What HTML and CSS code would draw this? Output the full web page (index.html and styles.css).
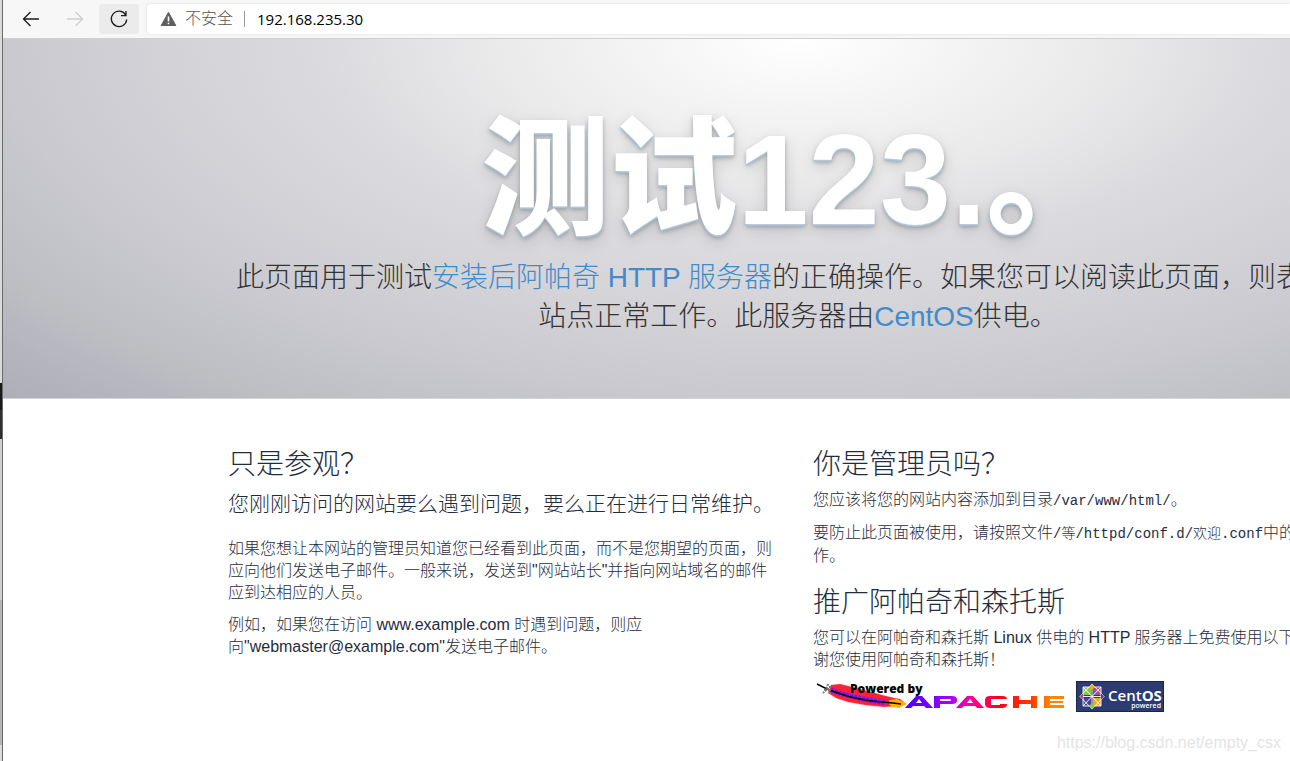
FILE: index.html
```
<!DOCTYPE html>
<html lang="zh-CN">

<head>
    <meta charset="UTF-8">
    <title>测试123</title>
    <link rel="stylesheet" href="styles.css">
</head>

<body>
    <div class="edge"></div>
    <div class="browser">
        <header class="toolbar">
            <button type="button" class="nav" aria-label="后退">
                <svg width="20" height="20" viewBox="0 0 20 20" fill="none" stroke="#1b1b1b" stroke-width="1.3"><path d="M18 10H2.500M9.500 3L2.500 10l7 7"/></svg>
            </button>
            <button type="button" class="nav" aria-label="前进" disabled>
                <svg width="20" height="20" viewBox="0 0 20 20" fill="none" stroke="#cfcfcf" stroke-width="1.3"><path d="M2 10h15.500M10.500 3l7 7-7 7"/></svg>
            </button>
            <button type="button" class="nav reload" aria-label="刷新">
                <svg width="20" height="20" viewBox="0 0 20 20" fill="none" stroke="#1b1b1b" stroke-width="1.3"><path d="M16.800 6.200A7.700 7.700 0 1 0 17.700 10.500M17 2v4.700h-5"/></svg>
            </button>
            <div class="address">
                <svg width="17" height="16" viewBox="0 0 17 16"><path fill="#5f5f5f" stroke="#5f5f5f" stroke-linejoin="round" d="M8.500 1.300L15.800 14.500H1.200z"/><path fill="#fff" d="M7.700 5.500h1.600v5H7.700zM7.700 11.700h1.600v1.600H7.700z"/></svg>
                <span class="unsafe">不安全</span>
                <input type="text" class="url" value="192.168.235.30" aria-label="地址">
            </div>
        </header>
        <div class="page">
            <div class="jumbotron">
                <div class="container">
                    <h1>测试123.。</h1>
                    <p class="lead">此页面用于测试<a href="#">安装后阿帕奇 HTTP 服务器</a>的正确操作。如果您可以阅读此页面，则表示此站点正常工作。此服务器由<a href="#">CentOS</a>供电。</p>
                </div>
            </div>
            <div class="container row">
                <div class="col">
                    <h2>只是参观？</h2>
                    <p class="intro">您刚刚访问的网站要么遇到问题，要么正在进行日常维护。</p>
                    <p>如果您想让本网站的管理员知道您已经看到此页面，而不是您期望的页面，则应向他们发送电子邮件。一般来说，发送到"网站站长"并指向网站域名的邮件应到达相应的人员。</p>
                    <p>例如，如果您在访问 www.example.com 时遇到问题，则应向"webmaster@example.com"发送电子邮件。</p>
                </div>
                <div class="col">
                    <h2>你是管理员吗？</h2>
                    <p>您应该将您的网站内容添加到目录<code>/var/www/html/</code>。</p>
                    <p>要防止此页面被使用，请按照文件<code>/等/httpd/conf.d/欢迎.conf</code>中的说明操作。</p>
                    <h2>推广阿帕奇和森托斯</h2>
                    <p>您可以在阿帕奇和森托斯 Linux 供电的 HTTP 服务器上免费使用以下图像。感谢您使用阿帕奇和森托斯！</p>
                    <div class="logos">
                        <a href="#" aria-label="Powered by Apache">
                            <svg width="259" height="32" viewBox="0 0 259 32">
                                <defs>
                                    <linearGradient id="rainbow" gradientUnits="userSpaceOnUse" x1="92" y1="0" x2="250" y2="0">
                                        <stop offset="0" stop-color="#4a00ff"/>
                                        <stop offset=".12" stop-color="#6a00ff"/>
                                        <stop offset=".28" stop-color="#a800ff"/>
                                        <stop offset=".42" stop-color="#ff0098"/>
                                        <stop offset=".6" stop-color="#ff0018"/>
                                        <stop offset=".8" stop-color="#ff3a00"/>
                                        <stop offset=".92" stop-color="#ff8800"/>
                                    </linearGradient>
                                </defs>
                                <path fill="#ff2038" stroke="#ff7a8c" stroke-width=".6" stroke-dasharray="1 1" d="M18 4l9-1 20 5 22 6 12 3 6 1 4 3-6 4-14 1-19-2-17-3-12-4-8-5z"/>
                                <path fill="none" stroke="#7a10ff" stroke-width="5" stroke-dasharray="3 1" d="M18 9q13 5 28 8t26 5"/>
                                <path fill="#ffb400" d="M76 19l8-1 7 3 3 2-8 4-7-1-3-3z"/>
                                <path fill="none" stroke="#000" stroke-width="1.500" d="M4 3l10 5q15 6 28 9t26 4 20 2"/>
                                <path fill="none" stroke="#777" stroke-width="2" stroke-dasharray="2 1" d="M15 3l-2 6-3 3M16 8l-6 1M17 5v8"/>
                                <text x="37" y="12" class="powered">Powered by</text>
                                <g fill="url(#rainbow)">
                                    <path fill-rule="evenodd" d="M92 27L103 15h6l11 12h-7l-2-2H100l-2 2zM103 22h6l-3-4z"/>
                                    <path fill-rule="evenodd" d="M121 15h18q5 0 5 4t-5 4h-12v4h-6zM127 18v2h10q1 0 1-1t-1-1z"/>
                                    <path fill-rule="evenodd" d="M143 27l11-12h6l11 12h-7l-2-2h-11l-2 2zM154 22h6l-3-4z"/>
                                    <path d="M194 18h-6l-1 0h-9v6h9v-1h7q0 4-5 4h-12q-5 0-5-4v-4q0-4 5-4h12q5 0 5 3z"/>
                                    <path d="M200 15h6v4h12v-4h6v12h-6v-4h-12v4h-6z"/>
                                    <path d="M231 15h20v3h-14v2h13v2h-13v2h14v3h-20z"/>
                                </g>
                            </svg>
                        </a>
                        <a href="#" aria-label="CentOS powered">
                            <svg width="88" height="31" viewBox="0 0 88 31">
                                <rect x=".5" y=".5" width="87" height="30" fill="#2c3b72" stroke="#1b2547"/>
                                <path fill="#8dc63f" d="M7 6h8v8H7z"/>
                                <path fill="#a14f8c" d="M17 6h8v8h-8z"/>
                                <path fill="#49429b" d="M7 17h8v8H7z"/>
                                <path fill="#efa724" d="M17 17h8v8h-8z"/>
                                <g fill="none" stroke="#fff" stroke-width=".9">
                                    <path d="M7 6h18v19H7zM16 3l12 12.500L16 28 4 15.500zM16 3v25M4 15.500h24M7 6l18 19M25 6L7 25"/>
                                </g>
                                <path fill="#efa724" d="M13 6l3-3 3 3-3 3z"/>
                                <path fill="#a14f8c" d="M4 15.500l3-3v6z"/>
                                <path fill="#49429b" d="M28 15.500l-3-3v6z"/>
                                <path fill="#8dc63f" d="M13 25l3 3 3-3-3-3z"/>
                                <text x="32" y="20" class="centos">Cent<tspan class="os">OS</tspan></text>
                                <text x="85" y="27" class="small">powered</text>
                            </svg>
                        </a>
                    </div>
                </div>
            </div>
        </div>
    </div>
    <div class="watermark">https://blog.csdn.net/empty_csx</div>
</body>

</html>
```
FILE: styles.css
```
* {
    box-sizing: border-box;
}

body {
    margin: 0;
    display: flex;
    min-height: 100vh;
    overflow: hidden;
    font-family: "Liberation Sans", "Noto Sans CJK SC", sans-serif;
    font-size: 16px;
    line-height: 22px;
    font-weight: 300;
    color: #1f2d3d;
    background: #fff;
}

/* strip of the window behind */
.edge {
    flex: none;
    width: 3px;
    border-right: 1px solid #6b6b6b;
    background: linear-gradient(#d9dadb 0 383px, #19191b 383px 410px, #2e2e33 410px 439px, #cfcfcf 439px 600px, #b5b5ba 600px 745px, #dcdcdc 745px);
}

.browser {
    flex: 1;
    min-width: 0;
    overflow: hidden;
}

.toolbar {
    display: flex;
    align-items: center;
    height: 39px;
    padding: 0 0 1px 8px;
    gap: 4px;
    background: #f7f7f7;
    border-bottom: 1px solid #cfcfcf;
}

.nav {
    display: flex;
    align-items: center;
    justify-content: center;
    width: 40px;
    height: 30px;
    padding: 0;
    border: 0;
    border-radius: 3px;
    background: none;
}

.reload {
    background: #ebebeb;
}

.address {
    flex: 1;
    display: flex;
    align-items: center;
    height: 30px;
    margin-left: 4px;
    padding-left: 13px;
    border-radius: 4px 0 0 4px;
    background: #fff;
    box-shadow: 0 0 3px #ddd;
}

.unsafe {
    margin-left: 8px;
    padding-right: 11px;
    border-right: 1px solid #999;
    line-height: 16px;
    color: #555;
}

.url {
    flex: 1;
    padding: 0 0 0 12px;
    border: 0;
    outline: 0;
    font: 15px "Open Sans", "Noto Sans", sans-serif;
    color: #000;
    background: none;
}

.page {
    min-width: 1590px;
}

.container {
    max-width: 1170px;
    margin: 0 auto;
    padding: 0 15px;
}

.jumbotron {
    padding: 63px 0 62px;
    text-align: center;
    border-bottom: 1px solid #d4d4d8;
    background: radial-gradient(ellipse farthest-corner at 50% 0, #fff 0%, #e9e9ea 28%, #dbdbdf 42%, #c9c9cf 70%, #bcbec2 85%, #b5b5be 92%, #aeaeb8 100%);
}

h1 {
    margin: 0;
    font-size: 128px;
    line-height: 156px;
    font-weight: 900;
    color: #fff;
    text-shadow: 0 1px 0 #b8cbdc, 0 2px 0 #a9bfd3, 0 3px 4px rgba(0, 0, 0, .25), 0 6px 16px rgba(0, 0, 0, .15);
}

.lead {
    margin: 0;
    font-size: 28px;
    line-height: 39px;
    color: #333;
}

a {
    color: #428bca;
    text-decoration: none;
}

.row {
    display: flex;
    gap: 30px;
    padding-top: 50px;
}

.col {
    flex: 1;
}

h2 {
    margin: 0 0 8px;
    font-size: 28px;
    line-height: 32px;
    font-weight: 300;
}

p {
    margin: 0 0 10px;
}

p + h2 {
    margin-top: 20px;
}

.intro {
    margin-bottom: 20px;
    font-size: 21px;
    line-height: 29px;
}

code {
    font-family: "Liberation Mono", "Noto Sans CJK SC", monospace;
    font-size: 14px;
}

.logos {
    display: flex;
    gap: 4px;
}

.powered {
    font: 800 12px "Open Sans", sans-serif;
    fill: #000;
}

.centos {
    font: 600 15px "Open Sans", sans-serif;
    fill: #fff;
}

.os {
    font-weight: 700;
}

.small {
    font: 600 7px "Open Sans", sans-serif;
    text-anchor: end;
    fill: #fff;
}

.watermark {
    position: absolute;
    right: 9px;
    bottom: 7px;
    font-weight: 400;
    color: #e4e4e4;
}
```
